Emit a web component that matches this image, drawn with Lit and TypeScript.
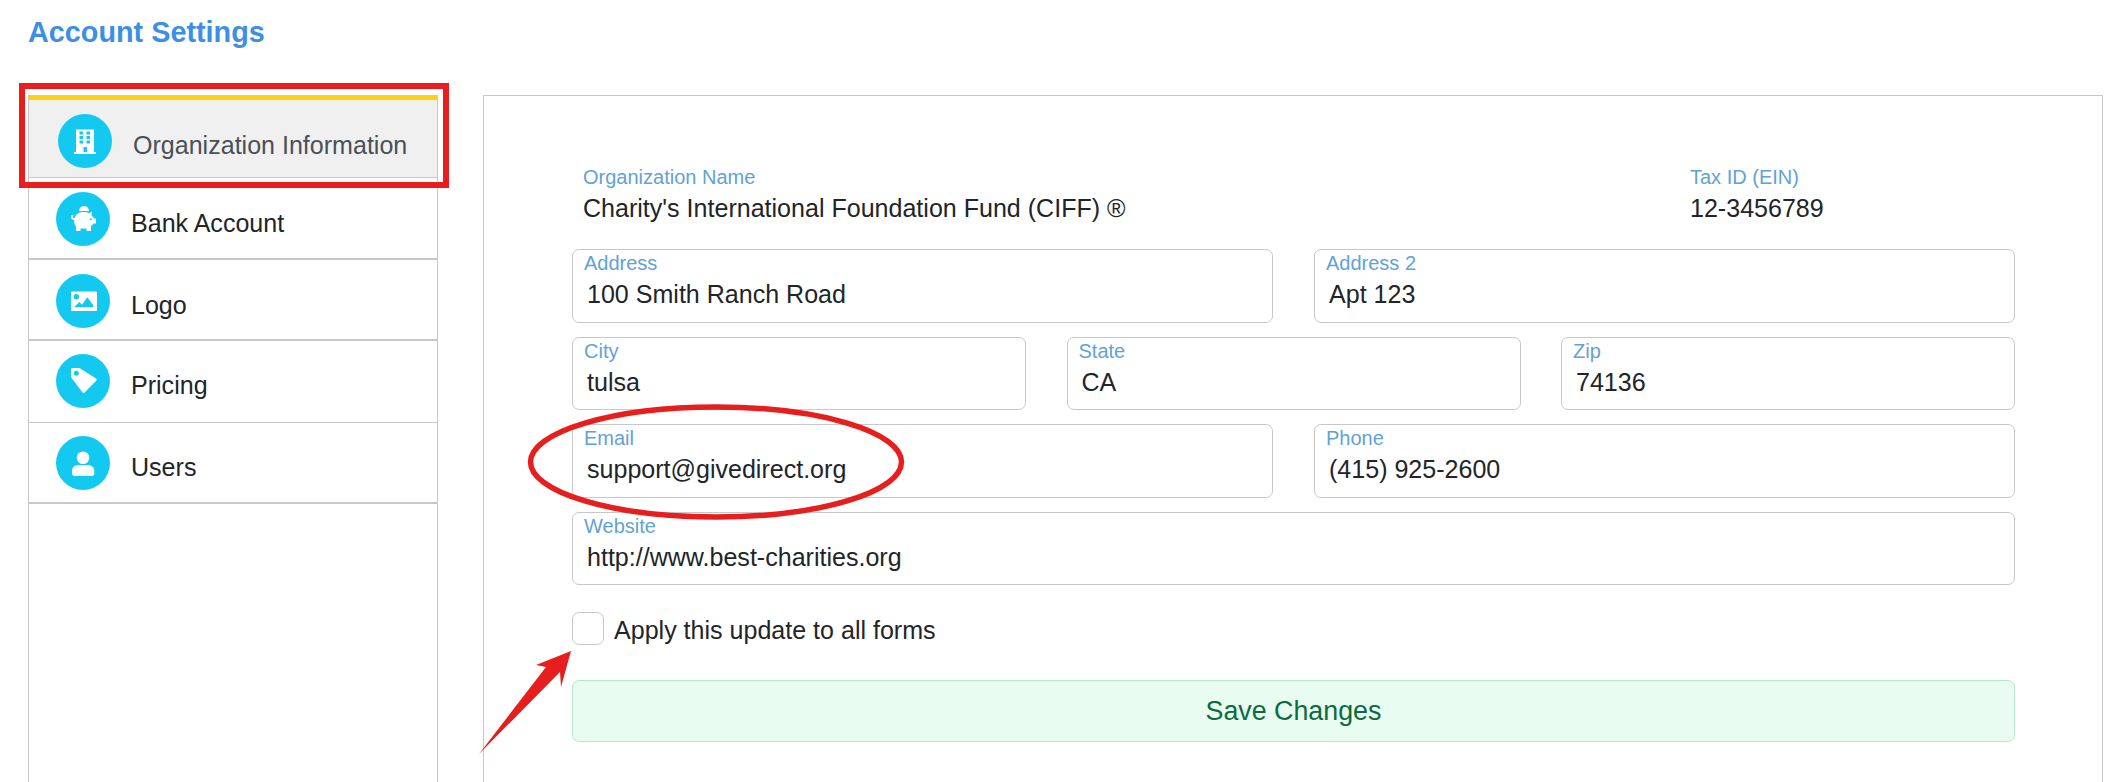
import { html, css, LitElement, svg } from 'lit'
import { customElement } from 'lit/decorators.js'

// all icons are drawn in the 54x54 box of the round badge
const icons = {
    building: svg`
        <path fill="#fff" d="M18 15.500h18V38h2v2H16v-2h2z" />
        <g fill="#13c9f0">
            <rect x="21.500" y="17.500" width="3.500" height="3" />
            <rect x="28.500" y="17.500" width="3.500" height="3" />
            <rect x="21.500" y="22" width="3.500" height="3" />
            <rect x="28.500" y="22" width="3.500" height="3" />
            <rect x="21.500" y="26.500" width="3.500" height="3" />
            <rect x="28.500" y="26.500" width="3.500" height="3" />
            <rect x="25.500" y="33" width="3.500" height="5" />
        </g>`,
    piggy: svg`
        <path fill="#fff" d="M23 19a5 5 0 0 1 10 0z" />
        <path
            fill="#fff"
            d="M20 23c2-2.500 5-3 8-3 2 0 3.500.5 5 1.300l3-1.800-.500 4c1.300 1 2 2 2.500 3h2v5h-2.500c-.6 1-1.500 2-2.500 2.500V39h-4.500v-2.500h-6V39h-4.500v-4.500c-1.500-1.500-2-3.500-1.800-6.500-1.700 0-3.200-1.300-3.200-3s1.500-2.500 2.500-2l-.3 1.500c-.6 0-.7 1.200.5 1.500.6 0 1.300-.3 1.800-1.500z"
        />
        <circle cx="34.700" cy="27.300" r="1" fill="#13c9f0" />`,
    image: svg`
        <path
            fill="#fff"
            fill-rule="evenodd"
            d="M16 17.500h24a1 1 0 0 1 1 1v17.500a1 1 0 0 1-1 1H16a1 1 0 0 1-1-1V18.500a1 1 0 0 1 1-1zM18 33.300h19.300v-2L31.300 23.300 26 30.700 23.300 28z"
        />
        <circle cx="20.300" cy="22.700" r="2.700" fill="#13c9f0" />`,
    tag: svg`
        <path
            fill="#fff"
            fill-rule="evenodd"
            d="M16.500 14h6.500c.5 0 1 .2 1.400.6l15.600 10c.8.6.8 1.500.2 2.200L28.800 38.300c-.7.8-1.700.8-2.400 0L15.600 24c-.4-.4-.6-1-.6-1.500v-7c0-.9.600-1.500 1.500-1.500zM20.300 16.800a2.500 2.500 0 1 0 0 5 2.500 2.500 0 0 0 0-5z"
        />`,
    user: svg`
        <circle cx="27" cy="21.700" r="6.300" fill="#fff" />
        <path fill="#fff" d="M22 29h10c3.500 0 6.300 2.500 6.300 6v2.500c0 1.500-1 2.500-2.500 2.500H18.500c-1.500 0-2.500-1-2.500-2.500V35c0-3.500 2.500-6 6-6z" />`,
}

const menu = [
    { label: 'Organization Information', icon: icons.building, active: true },
    { label: 'Bank Account', icon: icons.piggy },
    { label: 'Logo', icon: icons.image },
    { label: 'Pricing', icon: icons.tag },
    { label: 'Users', icon: icons.user },
]

@customElement('app-root')
export class AppRoot extends LitElement {
    static styles = css`
        :host {
            display: block;
            position: relative;
            height: 782px;
            overflow: hidden;
            background: #fff;
            color: #212529;
            font-family: 'Liberation Sans', Arial, sans-serif;
            font-size: 25.050px;
        }

        h1 {
            margin: 0;
            padding: 16px 0 0 28px;
            height: 95px;
            box-sizing: border-box;
            font-size: 28.8px;
            line-height: 32px;
            font-weight: bold;
            color: #3d8fe6;
        }

        .page {
            display: flex;
            height: 687px;
            padding-left: 28px;
        }

        .side {
            width: 410px;
            flex: none;
            box-sizing: border-box;
            border: solid #c8c8c8;
            border-width: 0 1px;
        }

        .row {
            display: flex;
            align-items: flex-start;
            height: 81.500px;
            box-sizing: border-box;
            padding: 14px 0 0 27px;
            gap: 21px;
            border-bottom: 2px solid #c8c8c8;
        }

        .row:nth-child(4) {
            border-bottom-width: 1px;
            padding-top: 13px;
        }

        .row:nth-child(5) {
            padding-top: 13px;
        }

        .row.active {
            height: 83px;
            margin: 0 -1px;
            padding-left: 29px;
            background: #f0f0f0;
            color: #495057;
            border: solid #c8c8c8;
            border-width: 5px 1px 1px;
            border-top-color: #fdd010;
        }

        .row span {
            line-height: 54px;
            padding-top: 4px;
        }

        .dot {
            width: 54px;
            height: 54px;
            flex: none;
            border-radius: 50%;
            background: #13c9f0;
        }

        .dot svg {
            display: block;
        }

        .panel {
            margin-left: 45px;
            width: 1620px;
            flex: none;
            box-sizing: border-box;
            border: solid #c8c8c8;
            border-width: 1px 1px 0;
            padding: 71px 87px 0 88px;
        }

        .head {
            display: flex;
            justify-content: space-between;
            padding: 0 0 0 11px;
            height: 82px;
        }

        .head .tax {
            width: 325px;
        }

        label,
        .lbl {
            display: block;
            color: #5fa3d6;
            font-size: 20px;
            line-height: 22px;
        }

        .lbl {
            margin-top: -1px;
        }

        .val {
            line-height: 36px;
            margin-top: 2px;
        }

        .grid {
            display: grid;
            gap: 14px 41px;
        }

        .two {
            grid-template-columns: 1fr 1fr;
        }

        .three {
            grid-template-columns: 1fr 1fr 1fr;
            column-gap: 40.500px;
        }

        .stack {
            display: flex;
            flex-direction: column;
            gap: 14px;
        }

        .field {
            height: 73.500px;
            box-sizing: border-box;
            border: 1px solid #c8c8c8;
            border-radius: 7px;
            padding: 2px 11px 0;
        }

        .field .val {
            margin-top: 2px;
            padding-left: 3px;
        }

        .check {
            display: flex;
            align-items: center;
            gap: 10px;
            margin-top: 27px;
        }

        .check span {
            padding-top: 3px;
        }

        .box {
            width: 32px;
            height: 33px;
            box-sizing: border-box;
            border: 1px solid #c8c8c8;
            border-radius: 7px;
        }

        .save {
            display: block;
            width: 100%;
            height: 62px;
            margin-top: 35px;
            box-sizing: border-box;
            border: 1px solid #b5e8d0;
            border-radius: 7px;
            background: #e9fcf2;
            color: #0b6b3e;
            font: inherit;
            font-size: 26.800px;
        }

        .marks {
            position: absolute;
            left: 0;
            top: 0;
            pointer-events: none;
        }
    `

    private field(name: string, value: string) {
        return html`<div class="field"><label>${name}</label><div class="val">${value}</div></div>`
    }

    render() {
        return html`
            <h1>Account Settings</h1>
            <div class="page">
                <nav class="side">
                    ${menu.map(
                        (m) => html`
                            <div class="row ${m.active ? 'active' : ''}">
                                <div class="dot">
                                    <svg width="54" height="54" viewBox="0 0 54 54">${m.icon}</svg>
                                </div>
                                <span>${m.label}</span>
                            </div>
                        `
                    )}
                </nav>
                <section class="panel">
                    <div class="head">
                        <div>
                            <div class="lbl">Organization Name</div>
                            <div class="val">Charity's International Foundation Fund (CIFF) ®</div>
                        </div>
                        <div class="tax">
                            <div class="lbl">Tax ID (EIN)</div>
                            <div class="val">12-3456789</div>
                        </div>
                    </div>
                    <div class="stack">
                        <div class="grid two">
                            ${this.field('Address', '100 Smith Ranch Road')} ${this.field('Address 2', 'Apt 123')}
                        </div>
                        <div class="grid three">
                            ${this.field('City', 'tulsa')} ${this.field('State', 'CA')} ${this.field('Zip', '74136')}
                        </div>
                        <div class="grid two">
                            ${this.field('Email', 'support@givedirect.org')} ${this.field('Phone', '(415) 925-2600')}
                        </div>
                        ${this.field('Website', 'http://www.best-charities.org')}
                    </div>
                    <div class="check">
                        <div class="box"></div>
                        <span>Apply this update to all forms</span>
                    </div>
                    <button class="save">Save Changes</button>
                </section>
            </div>
            <svg class="marks" width="2110" height="782" viewBox="0 0 2110 782">
                <rect x="22" y="86" width="424" height="99" fill="none" stroke="#e61e1e" stroke-width="6" />
                <ellipse cx="716" cy="462" rx="185.500" ry="55" fill="none" stroke="#e61e1e" stroke-width="5.500" />
                <path d="M479 754L546 667L536 665L571 651L561 687L560 672Z" fill="#e61e1e" />
            </svg>
        `
    }
}
